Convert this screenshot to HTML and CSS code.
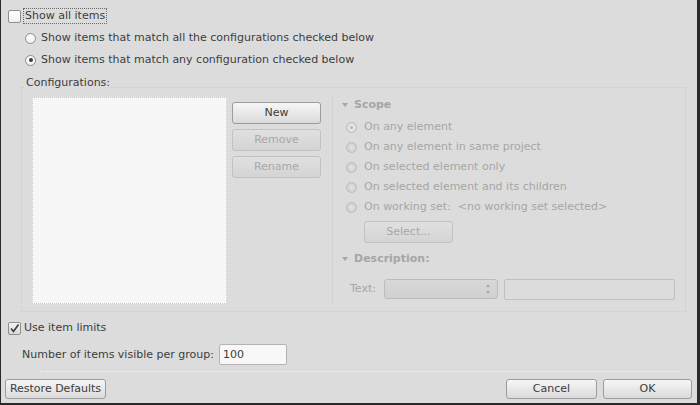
FILE: index.html
```html
<!DOCTYPE html>
<html>
<head>
<meta charset="utf-8">
<link rel="stylesheet" href="styles.css">
</head>
<body>
<div class="dialog">
  <div class="check-row first">
    <span class="checkbox"></span>
    <span class="focus-label">Show all items</span>
  </div>
  <div class="radio-row">
    <span class="radio"></span>
    <span>Show items that match all the configurations checked below</span>
  </div>
  <div class="radio-row">
    <span class="radio on"></span>
    <span>Show items that match any configuration checked below</span>
  </div>

  <div class="frame">
    <div class="frame-label">Configurations:</div>
    <div class="frame-body">
      <div class="list"></div>
      <div class="btn-col">
        <div class="btn">New</div>
        <div class="btn disabled">Remove</div>
        <div class="btn disabled">Rename</div>
      </div>
      <div class="vsep"></div>
      <div class="scope">
        <div class="section-head"><span class="tri"></span><span>Scope</span></div>
        <div class="scope-radio first"><span class="radio dis on"></span><span>On any element</span></div>
        <div class="scope-radio"><span class="radio dis"></span><span>On any element in same project</span></div>
        <div class="scope-radio"><span class="radio dis"></span><span>On selected element only</span></div>
        <div class="scope-radio"><span class="radio dis"></span><span>On selected element and its children</span></div>
        <div class="scope-radio"><span class="radio dis"></span><span>On working set:&nbsp;&nbsp;&lt;no working set selected&gt;</span></div>
        <div class="btn disabled select-btn">Select...</div>
        <div class="section-head desc"><span class="tri"></span><span>Description:</span></div>
        <div class="text-row">
          <span class="text-label">Text:</span>
          <div class="combo"><span class="spin"><span class="up"></span><span class="down"></span></span></div>
          <div class="field"></div>
        </div>
      </div>
    </div>
  </div>

  <div class="check-row limits">
    <span class="checkbox checked"><svg width="11" height="11" viewBox="0 0 11 11"><path d="M2 5.5 L4.5 8.5 L9.5 1.5" fill="none" stroke="#3a3a3a" stroke-width="1.6"/></svg></span>
    <span>Use item limits</span>
  </div>
  <div class="number-row">
    <span>Number of items visible per group:</span>
    <div class="num-input">100</div>
  </div>
  <div class="hsep"></div>
  <div class="footer">
    <div class="btn restore">Restore Defaults</div>
    <div class="footer-right">
      <div class="btn cancel">Cancel</div>
      <div class="btn ok">OK</div>
    </div>
  </div>
</div>
</body>
</html>
```

FILE: styles.css
```css
html, body {
  margin: 0;
  padding: 0;
  background: #dcdcdc;
}

.dialog {
  width: 700px;
  height: 405px;
  box-sizing: border-box;
  border-left: 1px solid #2a2a2a;
  border-right: 3px solid #2a2a2a;
  border-bottom: 2px solid #2a2a2a;
  background: #dcdcdc;
  display: flex;
  flex-direction: column;
  font-family: "DejaVu Sans", sans-serif;
  font-size: 11px;
  line-height: 14px;
  color: #3c3c3c;
  overflow: hidden;
}

.check-row {
  display: flex;
  align-items: center;
  height: 16px;
  margin-left: 7px;
  gap: 3px;
}
.check-row.first { margin-top: 8px; gap: 2px; }
.check-row.limits { margin-top: 8px; }

.checkbox {
  width: 13px;
  height: 13px;
  box-sizing: border-box;
  border: 1px solid #8e8e8e;
  border-radius: 2px;
  background: linear-gradient(#ffffff, #f0f0f0);
  display: flex;
  align-items: center;
  justify-content: center;
}
.checkbox.checked { background: linear-gradient(#f4f4f4, #d8d8d8); }
.checkbox svg { display: block; }

.focus-label {
  border: 1px dotted #6a6a6a;
  padding: 0 1px;
  line-height: 14px;
}

.radio-row {
  display: flex;
  align-items: center;
  gap: 5px;
  height: 16px;
  margin: 6px 0 0 24px;
}

.radio {
  width: 11px;
  height: 11px;
  box-sizing: border-box;
  border: 1px solid #8e8e8e;
  border-radius: 50%;
  background: radial-gradient(circle at 50% 35%, #ffffff, #ececec);
  display: flex;
  align-items: center;
  justify-content: center;
  flex: none;
}
.radio.on::after {
  content: "";
  width: 4px;
  height: 4px;
  border-radius: 50%;
  background: #3a3a3a;
}
.radio.dis {
  border-color: #bcbcbc;
  background: radial-gradient(circle, #e4e4e4, #c8c8c8);
}
.radio.dis.on {
  background: radial-gradient(circle, #f0f0f0, #d4d4d4);
}
.radio.dis.on::after {
  background: #b4b4b4;
  width: 3px;
  height: 3px;
}

.frame {
  margin: 19px 0 0 20px;
  width: 665px;
  height: 225px;
  box-sizing: border-box;
  border: 1px dotted #cacaca;
  display: flex;
  flex-direction: column;
}
.frame-label {
  align-self: flex-start;
  margin: -12px 0 0 3px;
  padding: 0 1px;
  background: #dcdcdc;
  height: 14px;
  line-height: 14px;
}
.frame-body {
  display: flex;
  margin-top: 7px;
  padding-left: 10px;
}

.list {
  width: 195px;
  height: 207px;
  box-sizing: border-box;
  background: #f7f7f7;
  border: 1px dotted #c8c8c8;
  flex: none;
}

.btn-col {
  display: flex;
  flex-direction: column;
  gap: 5px;
  margin: 5px 0 0 5px;
}

.btn {
  box-sizing: border-box;
  height: 22px;
  width: 89px;
  border: 1px solid #9c9c9c;
  border-radius: 3px;
  background: linear-gradient(#f6f6f6, #dadada);
  display: flex;
  align-items: center;
  justify-content: center;
  color: #3c3c3c;
  flex: none;
}
.btn.disabled {
  border-color: #c2c2c2;
  background: linear-gradient(#e0e0e0, #d4d4d4);
  color: #a8a8a8;
}

.vsep {
  margin-left: 11px;
  width: 0;
  height: 207px;
  border-left: 1px dotted #c6c6c6;
}

.scope {
  margin-left: 9px;
  display: flex;
  flex-direction: column;
  color: #a6a6a6;
}

.section-head {
  display: flex;
  align-items: center;
  height: 14px;
  font-weight: bold;
  margin-top: 1px;
}
.section-head.desc { margin-top: 9px; }
.tri {
  width: 0;
  height: 0;
  border-left: 3px solid transparent;
  border-right: 3px solid transparent;
  border-top: 4px solid #a6a6a6;
  margin-right: 6px;
}

.scope-radio {
  display: flex;
  align-items: center;
  gap: 7px;
  height: 16px;
  margin: 4px 0 0 4px;
}
.scope-radio.first { margin-top: 7px; }

.select-btn {
  margin: 6px 0 0 22px;
}

.text-row {
  display: flex;
  align-items: center;
  margin: 13px 0 0 8px;
  height: 20px;
}
.text-label { width: 34px; }
.combo {
  width: 114px;
  height: 20px;
  box-sizing: border-box;
  border: 1px solid #bcbcbc;
  border-radius: 3px;
  background: linear-gradient(#d8d8d8, #d0d0d0);
  display: flex;
  justify-content: flex-end;
  align-items: center;
  padding-right: 7px;
}
.spin {
  display: flex;
  flex-direction: column;
  gap: 4px;
}
.up, .down {
  width: 0;
  height: 0;
  border-left: 2px solid transparent;
  border-right: 2px solid transparent;
}
.up { border-bottom: 3px solid #a8a8a8; }
.down { border-top: 3px solid #a8a8a8; }

.field {
  margin-left: 6px;
  width: 171px;
  height: 21px;
  box-sizing: border-box;
  border: 1px solid #c0c0c0;
  border-radius: 2px;
  background: #dcdcdc;
}

.number-row {
  display: flex;
  align-items: center;
  gap: 5px;
  height: 21px;
  margin: 8px 0 0 21px;
}
.num-input {
  width: 68px;
  height: 21px;
  box-sizing: border-box;
  border: 1px solid #b4b4b4;
  border-radius: 2px;
  background: #f8f8f8;
  padding-left: 3px;
  display: flex;
  align-items: center;
}

.hsep {
  margin: 6px 17px 0 39px;
  height: 0;
  border-top: 1px dotted #f2f2f2;
}

.footer {
  display: flex;
  justify-content: space-between;
  margin: 7px 5px 0 4px;
}
.footer .btn { height: 20px; }
.restore { width: 101px; }
.footer-right { display: flex; gap: 6px; }
.cancel { width: 91px; }
.ok { width: 89px; }
```
